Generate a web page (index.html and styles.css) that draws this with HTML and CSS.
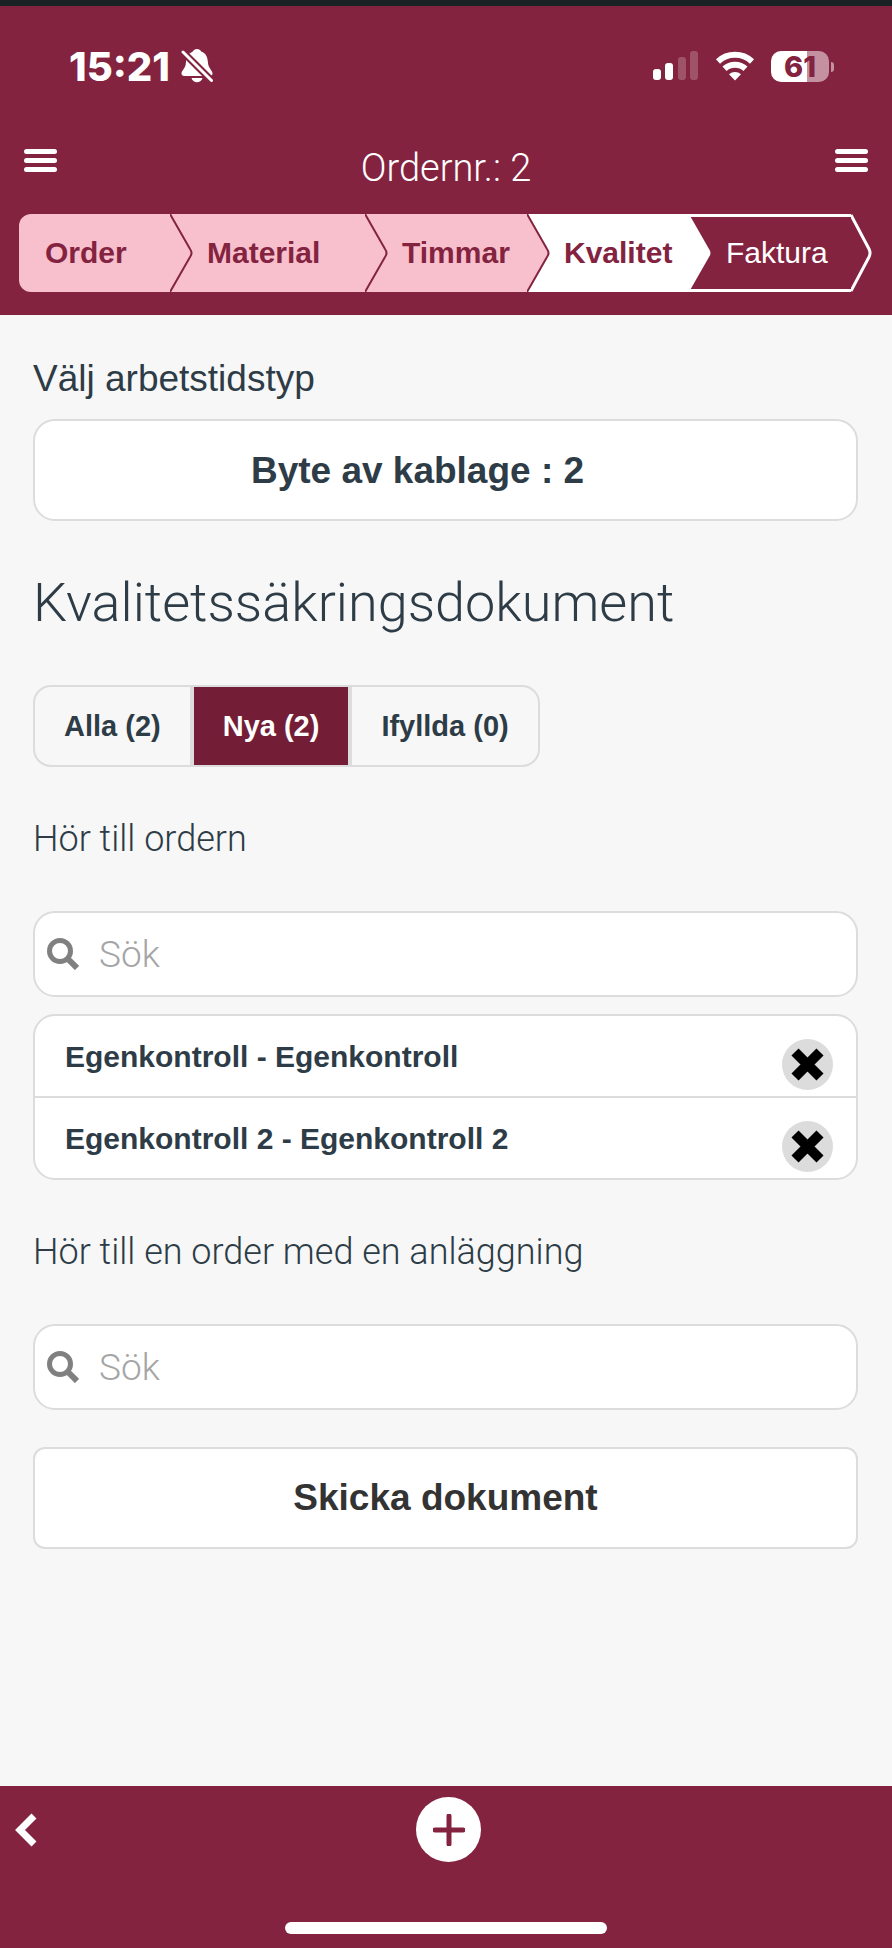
FILE: index.html
```html
<!DOCTYPE html>
<html lang="sv">
<head>
    <meta charset="UTF-8">
    <meta name="viewport" content="width=device-width, initial-scale=1.0">
    <title>Ordernr.: 2</title>
    <link rel="stylesheet" href="styles.css">
</head>
<body>
    <header class="header">
        <div class="status-bar">
            <div class="status-left">
                <span class="clock">15:21</span>
                <svg class="bell" width="32" height="34" viewBox="0 0 32 34">
                    <path d="M16 0c-2 0-3.500.9-4.200 2.400L7 5.500C5.500 8 5 10.500 4.900 14c-.1 5-4.400 7.400-4.400 10.500 0 1.500 1 2.500 2.800 2.500h25.400c1.800 0 2.800-1 2.800-2.500 0-3.100-4.200-5.500-4.500-10.500-.3-6-2-10-6.800-11.600C19.500.9 18 0 16 0z" fill="#fff"/>
                    <path d="M10.500 29h11c-.6 2.600-2.800 4.200-5.500 4.200s-4.900-1.600-5.500-4.200z" fill="#fff"/>
                    <path d="M-1 0l33 33" stroke="#83233f" stroke-width="7"/>
                    <path d="M2 3l28.500 28.500" stroke="#fff" stroke-width="3" stroke-linecap="round"/>
                </svg>
            </div>
            <div class="status-right">
                <svg width="46" height="30" viewBox="0 0 46 30" fill="#fff">
                    <rect x="0" y="18" width="8" height="11" rx="3"/>
                    <rect x="12" y="12" width="8" height="17" rx="3"/>
                    <rect x="25" y="6" width="8" height="23" rx="3" opacity=".22"/>
                    <rect x="37" y="0" width="8" height="29" rx="3" opacity=".22"/>
                </svg>
                <svg width="40" height="30" viewBox="0 0 40 30" fill="none" stroke="#fff" stroke-width="6">
                    <path d="M3 10.500a25 25 0 0 1 34 0"/>
                    <path d="M9.500 17.800a15.500 15.500 0 0 1 21 0"/>
                    <path d="M20 29.500l-6-6.200a8.700 8.700 0 0 1 12 0z" fill="#fff" stroke="none"/>
                </svg>
                <div class="battery">61</div>
            </div>
        </div>

        <div class="title-bar">
            <button class="menu-btn" aria-label="Meny"><span></span><span></span><span></span></button>
            <div class="title">Ordernr.: 2</div>
            <button class="menu-btn" aria-label="Alternativ"><span></span><span></span><span></span></button>
        </div>

        <nav class="steps">
            <a href="#" class="step done first">Order
                <svg class="arrow" viewBox="0 0 24 78"><path d="M0 0l20 35q3 4 0 8L0 78"/></svg>
            </a>
            <a href="#" class="step done">Material
                <svg class="arrow" viewBox="0 0 24 78"><path d="M0 0l20 35q3 4 0 8L0 78"/></svg>
            </a>
            <a href="#" class="step done">Timmar
                <svg class="arrow" viewBox="0 0 24 78"><path d="M0 0l20 35q3 4 0 8L0 78"/></svg>
            </a>
            <a href="#" class="step current">Kvalitet
                <svg class="arrow" viewBox="0 0 24 78"><path d="M0 0l20 35q3 4 0 8L0 78"/></svg>
            </a>
            <a href="#" class="step next">Faktura
                <svg class="arrow" viewBox="0 0 24 78"><path d="M0 1L18 35q2 4 0 8L0 77"/></svg>
            </a>
        </nav>
    </header>

    <main class="content">
        <label class="field-label" for="worktype">Välj arbetstidstyp</label>
        <select class="work-select" id="worktype">
            <option>Byte av kablage : 2</option>
        </select>

        <h1>Kvalitetssäkringsdokument</h1>

        <div class="tabs">
            <button class="tab">Alla (2)</button>
            <button class="tab active">Nya (2)</button>
            <button class="tab">Ifyllda (0)</button>
        </div>

        <h2>Hör till ordern</h2>
        <div class="search">
            <svg width="32" height="32" viewBox="0 0 32 32" fill="none" stroke="#808080">
                <circle cx="13" cy="13" r="10.500" stroke-width="5"/>
                <path d="M20 20l10 10" stroke-width="6"/>
            </svg>
            <input type="text" placeholder="Sök" aria-label="Sök dokument för ordern">
        </div>
        <ul class="doc-list">
            <li>
                <a href="#">Egenkontroll - Egenkontroll</a>
                <button class="remove-btn" aria-label="Ta bort">
                    <svg width="33" height="33" viewBox="0 0 33 33"><path d="M4 4l25 25M29 4L4 29" stroke="#000" stroke-width="10"/></svg>
                </button>
            </li>
            <li>
                <a href="#">Egenkontroll 2 - Egenkontroll 2</a>
                <button class="remove-btn" aria-label="Ta bort">
                    <svg width="33" height="33" viewBox="0 0 33 33"><path d="M4 4l25 25M29 4L4 29" stroke="#000" stroke-width="10"/></svg>
                </button>
            </li>
        </ul>

        <h2>Hör till en order med en anläggning</h2>
        <div class="search">
            <svg width="32" height="32" viewBox="0 0 32 32" fill="none" stroke="#808080">
                <circle cx="13" cy="13" r="10.500" stroke-width="5"/>
                <path d="M20 20l10 10" stroke-width="6"/>
            </svg>
            <input type="text" placeholder="Sök" aria-label="Sök dokument för anläggning">
        </div>

        <button class="send-btn">Skicka dokument</button>
    </main>

    <footer class="footer">
        <div class="footer-bar">
            <button class="back-btn" aria-label="Tillbaka">
                <svg width="22" height="34" viewBox="0 0 22 34"><path d="M19 3L5 17l14 14" fill="none" stroke="#fff" stroke-width="7"/></svg>
            </button>
            <button class="add-btn" aria-label="Lägg till">
                <svg width="32" height="32" viewBox="0 0 32 32"><path d="M16 2v28M2 16h28" stroke="#83233f" stroke-width="5" stroke-linecap="round"/></svg>
            </button>
        </div>
        <div class="home-indicator"></div>
    </footer>
</body>
</html>
```
FILE: styles.css
```css
* {
    box-sizing: border-box;
}

body {
    margin: 0;
    min-height: 100vh;
    display: flex;
    flex-direction: column;
    background: #f7f7f7;
    color: #2d3c46;
    font-family: "Liberation Sans", Arial, sans-serif;
}

button {
    padding: 0;
    border: none;
    background: none;
    color: inherit;
    font-family: inherit;
    cursor: pointer;
}

svg {
    display: block;
}

/* header */
.header {
    background: #83233f;
    border-top: 6px solid #1b2226;
    color: #fff;
    padding-bottom: 23px;
}

.status-bar {
    display: flex;
    justify-content: space-between;
    align-items: center;
    height: 120px;
    padding: 0 63px 0 69px;
}

.status-left, .status-right {
    display: flex;
    align-items: center;
}

.status-left {
    gap: 11px;
}

.status-right {
    gap: 16px;
}

.clock {
    font-family: Inter, sans-serif;
    font-size: 40px;
    font-weight: 800;
}

.battery {
    position: relative;
    width: 58px;
    height: 31px;
    border-radius: 10px;
    background: linear-gradient(to right, #fff 62%, #c391a0 62%);
    color: #83233f;
    font-family: Inter, sans-serif;
    font-size: 29px;
    font-weight: 800;
    line-height: 32px;
    text-align: center;
}

.battery::after {
    content: "";
    position: absolute;
    left: 60px;
    top: 11px;
    width: 3px;
    height: 10px;
    border-radius: 0 4px 4px 0;
    background: #c391a0;
}

.title-bar {
    display: flex;
    justify-content: space-between;
    height: 88px;
    padding: 23px 24px 0;
}

.menu-btn {
    display: flex;
    flex-direction: column;
    gap: 4px;
    width: 33px;
    height: 24px;
}

.menu-btn span {
    width: 100%;
    height: 5px;
    border-radius: 3px;
    background: #fff;
}

.title {
    font-family: Roboto, sans-serif;
    font-size: 38px;
    font-weight: 300;
    line-height: 38px;
}

.steps {
    display: grid;
    grid-template-columns: 151fr 195fr 162fr 162fr 162fr;
    padding: 0 41px 0 19px;
}

.step {
    position: relative;
    height: 78px;
    padding-left: 37px;
    color: #83233f;
    font-size: 30px;
    font-weight: bold;
    line-height: 78px;
    text-decoration: none;
}

.first {
    padding-left: 26px;
    border-radius: 12px 0 0 12px;
}

.done {
    background: #f8bfcd;
}

.current {
    background: #fff;
}

.next {
    border: solid #fff;
    border-width: 3px 0;
    color: #fff;
    font-weight: normal;
    line-height: 72px;
}

.arrow {
    position: absolute;
    left: 100%;
    top: 0;
    z-index: 1;
    width: 24px;
    height: 78px;
}

.done .arrow {
    fill: #f8bfcd;
    stroke: #83233f;
    stroke-width: 2;
}

.current .arrow {
    fill: #fff;
}

.next .arrow {
    top: -3px;
    fill: none;
    stroke: #fff;
    stroke-width: 3;
}

/* content */
.content {
    display: flex;
    flex-direction: column;
    flex: 1;
    padding: 42px 34px 0 33px;
}

.field-label {
    font-size: 37px;
    line-height: 44px;
    margin-bottom: 18px;
}

.work-select, .send-btn {
    width: 100%;
    height: 102px;
    border: 2px solid #dcdcdc;
    background: #fff;
    font-size: 37px;
    font-weight: bold;
}

.work-select {
    appearance: none;
    padding: 0 56px 0 0;
    border-radius: 22px;
    color: #2d3c46;
    font-family: inherit;
    text-align: center;
    text-align-last: center;
}

h1 {
    margin: 52px 0;
    font-family: Roboto, sans-serif;
    font-size: 54px;
    font-weight: 300;
    line-height: 60px;
}

h2 {
    margin: 52px 0;
    font-family: Roboto, sans-serif;
    font-size: 36px;
    font-weight: 300;
    line-height: 40px;
}

.tabs {
    display: flex;
    align-self: flex-start;
    gap: 4px;
    height: 82px;
    border: 2px solid #dcdcdc;
    border-radius: 18px;
    background: #dcdcdc;
    overflow: hidden;
}

.tab {
    padding: 0 29px;
    background: #f7f7f7;
    font-size: 29px;
    font-weight: bold;
}

.tab.active {
    background: #731e36;
    color: #fff;
}

.search {
    display: flex;
    align-items: center;
    gap: 20px;
    height: 86px;
    padding: 0 14px 0 12px;
    border: 2px solid #dcdcdc;
    border-radius: 22px;
    background: #fff;
}

.search input {
    flex: 1;
    height: 60px;
    padding: 0;
    border: none;
    outline: none;
    background: none;
    font-family: Roboto, sans-serif;
    font-size: 37px;
    font-weight: 300;
}

.search input::placeholder {
    color: #a5a5a5;
}

.doc-list {
    margin: 17px 0 0;
    padding: 0;
    border: 2px solid #dcdcdc;
    border-radius: 22px;
    background: #fff;
    list-style: none;
}

.doc-list li {
    display: flex;
    justify-content: space-between;
    height: 80px;
    padding: 0 23px 0 30px;
}

.doc-list li + li {
    border-top: 2px solid #dcdcdc;
    height: 82px;
}

.doc-list a {
    color: inherit;
    font-size: 30px;
    font-weight: bold;
    line-height: 82px;
    text-decoration: none;
}

.remove-btn {
    display: flex;
    align-items: center;
    justify-content: center;
    width: 51px;
    height: 51px;
    margin-top: 23px;
    border-radius: 50%;
    background: #dcdcdc;
}

.send-btn {
    margin-top: 37px;
    border-radius: 12px;
    color: #333;
}

/* footer */
.footer {
    background: #83233f;
    padding-bottom: 14px;
}

.footer-bar {
    display: grid;
    grid-template-columns: 1fr auto 1fr;
    align-items: center;
    padding: 11px 10px 60px 15px;
}

.add-btn {
    display: flex;
    align-items: center;
    justify-content: center;
    width: 65px;
    height: 65px;
    border-radius: 50%;
    background: #fff;
}

.back-btn {
    justify-self: start;
}

.home-indicator {
    width: 36%;
    height: 12px;
    margin: 0 auto;
    border-radius: 6px;
    background: #fff;
}
```
